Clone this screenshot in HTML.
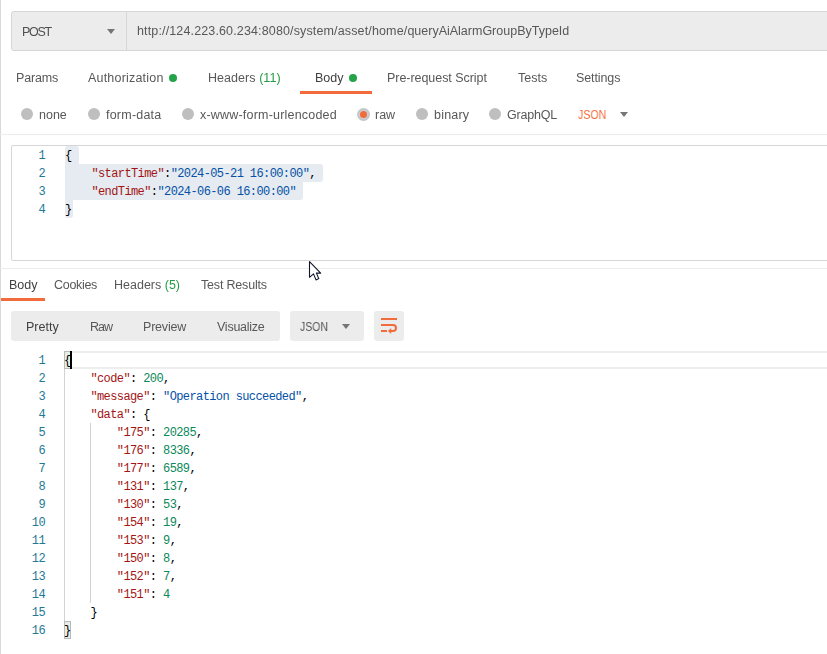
<!DOCTYPE html>
<html><head><meta charset="utf-8">
<style>
*{box-sizing:border-box;margin:0;padding:0}
html,body{width:827px;height:654px;overflow:hidden;background:#fff}
body{font-family:"Liberation Sans",sans-serif;font-size:12px;color:#505050;position:relative}
.abs{position:absolute}
.t{position:absolute;white-space:nowrap;line-height:16px;font-size:12.5px;color:#585858;will-change:transform}
.g{color:#249c47}
.hl{position:absolute;height:1px;left:0;right:0}
.dot{position:absolute;width:8px;height:8px;border-radius:50%;background:#25a349}
.radio{position:absolute;width:12px;height:12px;border-radius:50%;background:#bfbfbf}
.mono{font-family:"Liberation Mono",monospace;font-size:12px;letter-spacing:-0.6px;white-space:pre;position:absolute;line-height:18px}
.ln{color:#237893;text-align:right;width:40px;left:5px}
.k{color:#a31515}.s{color:#0451a5}.n{color:#09885a}.p{color:#000}
.sel{position:absolute;background:#e5ebf1;height:18px}
</style></head><body>
<div class="abs" style="left:0;top:0;width:1px;height:654px;background:#d9d9d9"></div>

<!-- URL bar -->
<div class="abs" style="left:11px;top:11px;width:830px;height:40px;background:#ececec;border:1px solid #d6d6d6;border-radius:3px"></div>
<div class="abs" style="left:126px;top:12px;width:1px;height:38px;background:#d6d6d6"></div>
<div class="t" id="post" style="left:22px;top:24px;color:#505050;font-size:12.5px;letter-spacing:-1.3px">POST</div>
<div class="abs" style="left:107px;top:29px;width:0;height:0;border-left:4px solid transparent;border-right:4px solid transparent;border-top:5px solid #757575"></div>
<div class="t" id="url" style="left:137px;top:23px;font-size:12.5px"><span style="letter-spacing:0.14px">http://124.223.60.234:8080/system/asset/home/</span>queryAiAlarmGroupByTypeId</div>

<!-- request tabs -->
<div class="t" style="left:16px;top:70px;letter-spacing:-0.15px">Params</div>
<div class="t" style="left:88px;top:70px;letter-spacing:0.2px">Authorization</div>
<div class="dot" style="left:169px;top:74px"></div>
<div class="t" style="left:207.5px;top:70px;letter-spacing:0.05px">Headers <span class="g">(11)</span></div>
<div class="t" style="left:315px;top:70px;color:#404040">Body</div>
<div class="dot" style="left:349px;top:74px"></div>
<div class="abs" style="left:300px;top:91px;width:72px;height:3px;background:#f26b3a"></div>
<div class="t" style="left:386.7px;top:70px;letter-spacing:-0.05px">Pre-request Script</div>
<div class="t" style="left:517.5px;top:70px">Tests</div>
<div class="t" style="left:575.9px;top:70px;letter-spacing:-0.1px">Settings</div>

<!-- body type row -->
<div class="radio" style="left:21px;top:108px"></div><div class="t" style="left:39px;top:107px">none</div>
<div class="radio" style="left:88px;top:108px"></div><div class="t" style="left:105.5px;top:107px;letter-spacing:0.22px">form-data</div>
<div class="radio" style="left:182px;top:108px"></div><div class="t" style="left:199.7px;top:107px;letter-spacing:0.2px">x-www-form-urlencoded</div>
<div class="radio" style="left:357px;top:108px;width:13px;height:13px;background:#c4c6c7"></div><div class="abs" style="left:359px;top:110px;width:9px;height:9px;border-radius:50%;background:#c9d2d5"></div><div class="abs" style="left:360px;top:111px;width:7px;height:7px;border-radius:50%;background:#f26b3a"></div><div class="t" style="left:375px;top:107px">raw</div>
<div class="radio" style="left:416px;top:108px"></div><div class="t" style="left:434px;top:107px;letter-spacing:0.2px">binary</div>
<div class="radio" style="left:489px;top:108px"></div><div class="t" style="left:507.3px;top:107px;letter-spacing:-0.2px">GraphQL</div>
<div class="t" style="left:577.5px;top:107px;color:#f26b3a;transform:scaleX(0.85);transform-origin:0 0">JSON</div>
<div class="abs" style="left:620px;top:112px;width:0;height:0;border-left:4px solid transparent;border-right:4px solid transparent;border-top:5px solid #757575"></div>

<div class="hl" style="top:134px;background:#ececec"></div>

<!-- request editor -->
<div class="abs" style="left:11px;top:145px;width:830px;height:116px;border:1px solid #d6d6d6;border-radius:2px"></div>
<div class="sel" style="left:65px;top:146px;width:14px;border-radius:3px 3px 0 0"></div>
<div class="sel" style="left:65px;top:164px;width:258px;border-radius:0 3px 3px 0"></div>
<div class="sel" style="left:65px;top:182px;width:238px;border-radius:0 0 3px 0"></div>
<div class="sel" style="left:65px;top:200px;width:8px;border-radius:0 0 3px 3px"></div>
<div class="mono ln" style="top:147px">1
2
3
4</div>
<div class="mono p" style="left:65px;top:147px">{
    <span class="k">"startTime"</span>:<span class="s">"2024-05-21 16:00:00"</span>,
    <span class="k">"endTime"</span>:<span class="s">"2024-06-06 16:00:00"</span>
}</div>

<div class="hl" style="top:268px;background:#ececec"></div>

<!-- response tabs -->
<div class="t" style="left:9px;top:277px;color:#404040">Body</div>
<div class="abs" style="left:1px;top:298px;width:44px;height:3px;background:#f26b3a"></div>
<div class="t" style="left:53.5px;top:277px;letter-spacing:-0.3px">Cookies</div>
<div class="t" style="left:113.5px;top:277px">Headers <span class="g">(5)</span></div>
<div class="t" style="left:200.5px;top:277px;letter-spacing:-0.18px">Test Results</div>

<!-- view toolbar -->
<div class="abs" style="left:11px;top:311px;width:269px;height:30px;background:#ececec;border-radius:3px"></div>
<div class="t" style="left:26px;top:319px;color:#404040">Pretty</div>
<div class="t" style="left:90px;top:319px;letter-spacing:-1px">Raw</div>
<div class="t" style="left:143px;top:319px;letter-spacing:-0.2px">Preview</div>
<div class="t" style="left:217px;top:319px;letter-spacing:-0.25px">Visualize</div>
<div class="abs" style="left:290px;top:311px;width:74px;height:30px;background:#ececec;border-radius:3px"></div>
<div class="t" style="left:300.4px;top:319px;transform:scaleX(0.84);transform-origin:0 0">JSON</div>
<div class="abs" style="left:342px;top:324px;width:0;height:0;border-left:4px solid transparent;border-right:4px solid transparent;border-top:5px solid #757575"></div>
<div class="abs" style="left:374px;top:311px;width:30px;height:30px;background:#ececec;border-radius:3px"></div>
<svg class="abs" style="left:374px;top:311px" width="30" height="30" viewBox="0 0 30 30"><g fill="none" stroke="#f26b3a" stroke-width="2"><path d="M7 8h16M7 14h12a3 3 0 0 1 0 6h-2M7 20h6"/></g><path d="M13.9 20l3.3-3v6z" fill="#f26b3a"/></svg>


<!-- response editor -->
<div class="abs" style="left:64px;top:351px;width:763px;height:18px;border-top:2px solid #eeeeee;border-bottom:2px solid #eeeeee"></div>
<div class="abs" style="left:64px;top:369px;width:1px;height:252px;background:#d3d3d3"></div>
<div class="abs" style="left:90px;top:423px;width:1px;height:180px;background:#d3d3d3"></div>
<div class="abs" style="left:64px;top:351px;width:7px;height:18px;border:1px solid #b9b9b9;background:#e6efe6"></div>
<div class="abs" style="left:64px;top:621px;width:7px;height:18px;border:1px solid #b9b9b9;background:#e6efe6"></div>
<div class="mono ln" style="top:352px">1
2
3
4
5
6
7
8
9
10
11
12
13
14
15
16</div>
<div class="mono p" style="left:64px;top:352px">{
    <span class="k">"code"</span>: <span class="n">200</span>,
    <span class="k">"message"</span>: <span class="s">"Operation succeeded"</span>,
    <span class="k">"data"</span>: {
        <span class="k">"175"</span>: <span class="n">20285</span>,
        <span class="k">"176"</span>: <span class="n">8336</span>,
        <span class="k">"177"</span>: <span class="n">6589</span>,
        <span class="k">"131"</span>: <span class="n">137</span>,
        <span class="k">"130"</span>: <span class="n">53</span>,
        <span class="k">"154"</span>: <span class="n">19</span>,
        <span class="k">"153"</span>: <span class="n">9</span>,
        <span class="k">"150"</span>: <span class="n">8</span>,
        <span class="k">"152"</span>: <span class="n">7</span>,
        <span class="k">"151"</span>: <span class="n">4</span>
    }
}</div>
<div class="abs" style="left:70px;top:351px;width:2px;height:18px;background:#000"></div>

<!-- mouse cursor -->
<svg class="abs" style="left:308px;top:260px" width="16" height="24" viewBox="0 0 16 24"><path d="M1.5 1.7V17.3L5.5 13.9L8 19.9L10.8 18.6L8.4 13.1H12.7Z" fill="#fff" stroke="#10142a" stroke-width="1.1" stroke-linejoin="round"/></svg>
</body></html>
